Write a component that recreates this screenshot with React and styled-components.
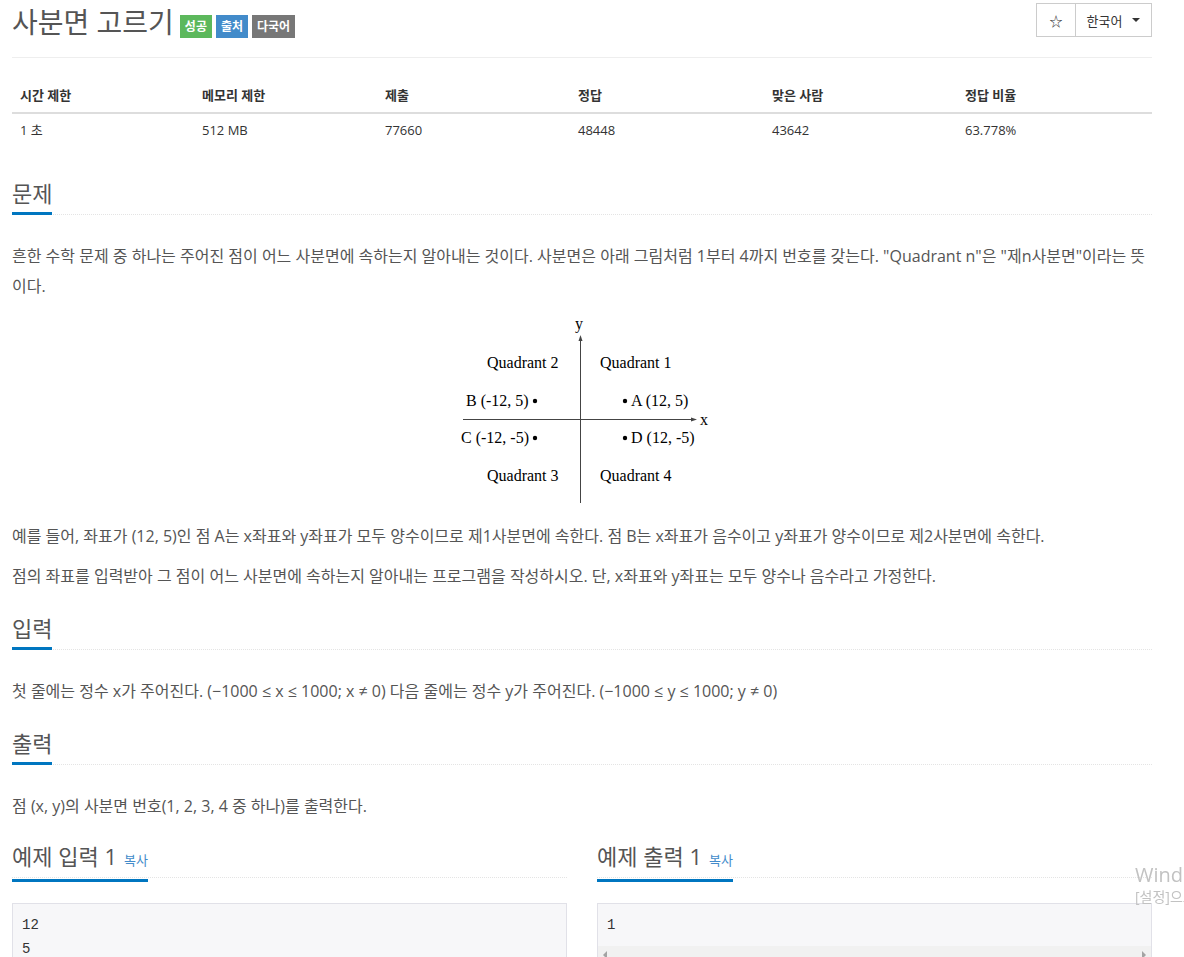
import React from "react";
import styled, { createGlobalStyle } from "styled-components";

const GlobalStyle = createGlobalStyle`
  html, body { margin: 0; padding: 0; background: #fff; }
  body {
    font-family: "Open Sans", "Noto Sans CJK KR", sans-serif;
    color: #555;
    overflow: hidden;
  }
  * { box-sizing: border-box; }
`;

const Page = styled.div`
  width: 1140px;
  margin-left: 12px;
`;

const TitleBar = styled.div`
  display: flex;
  justify-content: space-between;
  align-items: flex-start;
  height: 58px;
  border-bottom: 1px solid #eee;
`;

const TitleGroup = styled.div`
  display: flex;
  align-items: center;
  gap: 4px;
  padding-top: 4px;
`;

const Title = styled.h1`
  margin: 0 2px 0 0;
  font-size: 28px;
  line-height: 36px;
  font-weight: 400;
  color: #555;
`;

const Badge = styled.span`
  display: inline-block;
  margin-top: 8px;
  height: 23px;
  line-height: 23px;
  padding: 0 5px;
  font-size: 12px;
  font-weight: 700;
  color: #fff;
  background: ${(p) => p.$bg};
`;

const BtnGroup = styled.div`
  display: flex;
  margin-top: 3px;
  border: 1px solid #ccc;
  height: 34px;
`;

const Btn = styled.div`
  display: flex;
  align-items: center;
  justify-content: center;
  gap: 10px;
  width: ${(p) => p.$w}px;
  font-size: 13px;
  color: #333;
  & + & { border-left: 1px solid #ccc; }
`;

const Caret = styled.span`
  width: 0;
  height: 0;
  border-left: 4px solid transparent;
  border-right: 4px solid transparent;
  border-top: 4px solid #333;
`;

const Table = styled.table`
  width: 1140px;
  margin-top: 21px;
  border-collapse: collapse;
  table-layout: fixed;
  font-size: 13px;
`;

const Th = styled.th`
  text-align: left;
  padding: 8px;
  line-height: 17px;
  font-weight: 700;
  color: #333;
  border-bottom: 2px solid #ddd;
`;

const Td = styled.td`
  padding: 8px;
  line-height: 17px;
  color: #333;
`;

const Headline = styled.div`
  border-bottom: 1px dotted #e4e4e4;
  margin-top: ${(p) => p.$mt}px;
  height: 37px;
`;

const H2 = styled.h2`
  display: inline-block;
  margin: 0;
  font-size: 22px;
  line-height: 30px;
  font-weight: 400;
  color: #555;
  padding-bottom: 4px;
  border-bottom: 3px solid #0076c0;
`;

const Copy = styled.span`
  margin-left: 7px;
  font-size: 13px;
  color: #428bca;
`;

const Text = styled.div`
  margin-top: 26px;
  font-size: 16px;
  line-height: 30px;
  color: #555;
`;

const P = styled.p`
  margin: 0 0 10px;
`;

const Figure = styled.div`
  display: flex;
  justify-content: center;
  margin-bottom: 10px;
`;

const Samples = styled.div`
  display: grid;
  grid-template-columns: 1fr 1fr;
  gap: 30px;
  margin-top: 20px;
`;

const SampleBox = styled.div`
  margin-top: 25px;
  border: 1px solid #e1e1e8;
  background: #f7f7f9;
`;

const Pre = styled.pre`
  margin: 0;
  padding: 9px 9px;
  font-family: "Liberation Mono", "DejaVu Sans Mono", monospace;
  font-size: 14px;
  line-height: 24px;
  color: #333;
`;

const FakeScroll = styled.div`
  display: flex;
  justify-content: space-between;
  align-items: center;
  height: 17px;
  background: #f1f1f1;
  padding: 0 5px;
`;

const Arrow = styled.span`
  width: 0;
  height: 0;
  border-top: 4px solid transparent;
  border-bottom: 4px solid transparent;
  ${(p) => (p.$dir === "left" ? "border-right: 4px solid #a3a3a3;" : "border-left: 4px solid #a3a3a3;")}
`;

const Watermark = styled.div`
  position: fixed;
  left: 1135px;
  top: 862px;
  color: #c2c2c2;
  white-space: nowrap;
  font-family: "Open Sans", "Noto Sans CJK KR", sans-serif;
`;

const WmBig = styled.div`
  font-size: 20px;
  line-height: 26px;
`;

const WmSmall = styled.div`
  font-size: 14px;
  line-height: 18px;
`;

const Diagram = () => (
  <svg width="300" height="200" viewBox="0 0 300 200">
    <g fill="#000" fontFamily="'Liberation Serif', 'Times New Roman', serif" fontSize="16">
      <text x="147" y="18" textAnchor="middle">y</text>
      <text x="268" y="114">x</text>
      <text x="55" y="57">Quadrant 2</text>
      <text x="168" y="57">Quadrant 1</text>
      <text x="34" y="95">B (-12, 5)</text>
      <text x="199" y="95">A (12, 5)</text>
      <text x="29" y="132">C (-12, -5)</text>
      <text x="199" y="132">D (12, -5)</text>
      <text x="55" y="170">Quadrant 3</text>
      <text x="168" y="170">Quadrant 4</text>
      <circle cx="103" cy="90" r="2.2" />
      <circle cx="193" cy="90" r="2.2" />
      <circle cx="103" cy="127" r="2.2" />
      <circle cx="193" cy="127" r="2.2" />
    </g>
    <g stroke="#444" strokeWidth="1" fill="none">
      <line x1="148.5" y1="26" x2="148.5" y2="192" />
      <line x1="31" y1="108.5" x2="262" y2="108.5" />
    </g>
    <g fill="#444">
      <polygon points="148.5,24 146.5,30 150.5,30" />
      <polygon points="265,108.5 259,106.5 259,110.5" />
    </g>
  </svg>
);

const headers = ["시간 제한", "메모리 제한", "제출", "정답", "맞은 사람", "정답 비율"];
const values = ["1 초", "512 MB", "77660", "48448", "43642", "63.778%"];
const widths = [182, 183, 193, 194, 193, 195];

export default function App() {
  return (
    <>
      <GlobalStyle />
      <Page>
        <TitleBar>
          <TitleGroup>
            <Title>사분면 고르기</Title>
            <Badge $bg="#5cb85c">성공</Badge>
            <Badge $bg="#428bca">출처</Badge>
            <Badge $bg="#777">다국어</Badge>
          </TitleGroup>
          <BtnGroup>
            <Btn $w={38}>☆</Btn>
            <Btn $w={76}>
              한국어 <Caret />
            </Btn>
          </BtnGroup>
        </TitleBar>

        <Table>
          <colgroup>
            {widths.map((w, i) => (
              <col key={i} style={{ width: w }} />
            ))}
          </colgroup>
          <thead>
            <tr>
              {headers.map((h) => (
                <Th key={h}>{h}</Th>
              ))}
            </tr>
          </thead>
          <tbody>
            <tr>
              {values.map((v) => (
                <Td key={v}>{v}</Td>
              ))}
            </tr>
          </tbody>
        </Table>

        <Headline $mt={31}>
          <H2>문제</H2>
        </Headline>
        <Text>
          <P>
            흔한 수학 문제 중 하나는 주어진 점이 어느 사분면에 속하는지 알아내는 것이다. 사분면은 아래 그림처럼 1부터 4까지 번호를 갖는다. "Quadrant n"은 "제n사분면"이라는 뜻이다.
          </P>
          <Figure>
            <Diagram />
          </Figure>
          <P>
            예를 들어, 좌표가 (12, 5)인 점 A는 x좌표와 y좌표가 모두 양수이므로 제1사분면에 속한다. 점 B는 x좌표가 음수이고 y좌표가 양수이므로 제2사분면에 속한다.
          </P>
          <P>점의 좌표를 입력받아 그 점이 어느 사분면에 속하는지 알아내는 프로그램을 작성하시오. 단, x좌표와 y좌표는 모두 양수나 음수라고 가정한다.</P>
        </Text>

        <Headline $mt={22}>
          <H2>입력</H2>
        </Headline>
        <Text>
          <P>첫 줄에는 정수 x가 주어진다. (−1000 ≤ x ≤ 1000; x ≠ 0) 다음 줄에는 정수 y가 주어진다. (−1000 ≤ y ≤ 1000; y ≠ 0)</P>
        </Text>

        <Headline $mt={22}>
          <H2>출력</H2>
        </Headline>
        <Text>
          <P>점 (x, y)의 사분면 번호(1, 2, 3, 4 중 하나)를 출력한다.</P>
        </Text>

        <Samples>
          <div>
            <Headline $mt={0}>
              <H2>
                예제 입력 1<Copy>복사</Copy>
              </H2>
            </Headline>
            <SampleBox>
              <Pre>{"12\n5"}</Pre>
            </SampleBox>
          </div>
          <div>
            <Headline $mt={0}>
              <H2>
                예제 출력 1<Copy>복사</Copy>
              </H2>
            </Headline>
            <SampleBox>
              <Pre>1</Pre>
              <FakeScroll>
                <Arrow $dir="left" />
                <Arrow $dir="right" />
              </FakeScroll>
            </SampleBox>
          </div>
        </Samples>
      </Page>
      <Watermark>
        <WmBig>Windows 정품 인증</WmBig>
        <WmSmall>[설정]으로 이동하여 Windows를 정품 인증합니다.</WmSmall>
      </Watermark>
    </>
  );
}
